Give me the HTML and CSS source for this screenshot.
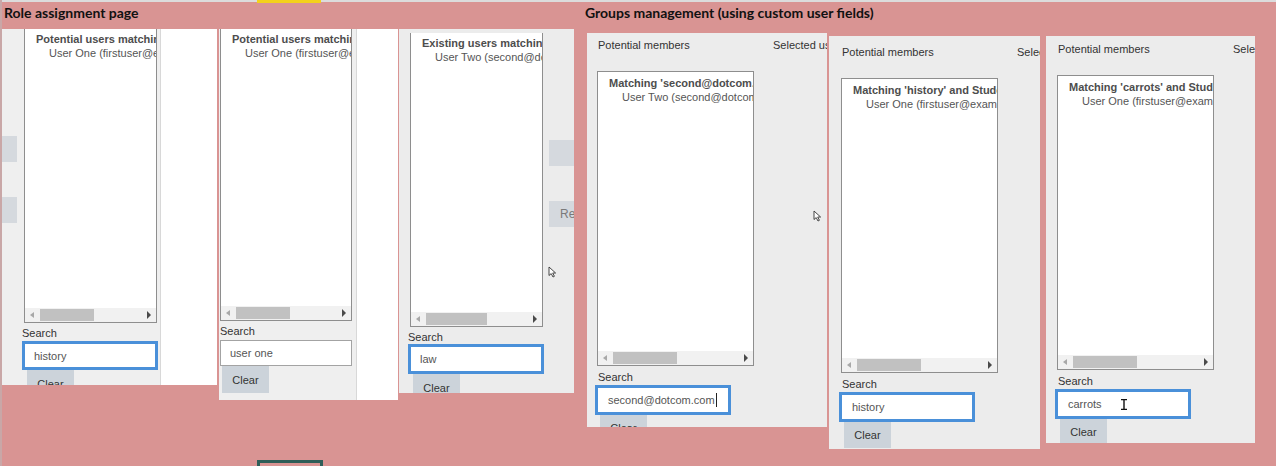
FILE: index.html
```html
<!DOCTYPE html>
<html lang="en">
  <head>
    <meta charset="UTF-8" />
    <meta name="viewport" content="width=device-width, initial-scale=1.0" />
    <title>User selector screenshots</title>
    <link rel="stylesheet" href="styles.css">
  </head>
  <body>
    <div class="topline"><span class="mark"></span></div>
    <h1 class="cap cap-role">Role assignment page</h1>
    <h1 class="cap cap-groups">Groups management (using custom user fields)</h1>

    <!-- role assignment, three states -->
    <section class="shot r1">
      <div class="side">
        <div class="stub s1"></div>
        <div class="stub s2"></div>
      </div>
      <div class="col">
        <div class="list cut">
          <div class="list-body">
            <b>Potential users matching 'history'</b>
            <div class="opt">User One (firstuser@example.com)</div>
          </div>
          <div class="hscroll"><i class="arr-l"></i><i class="thumb"></i><i class="arr-r"></i></div>
        </div>
        <p class="lbl">Search</p>
        <div class="field">history</div>
        <div class="btn">Clear</div>
      </div>
      <div class="blank"></div>
    </section>

    <section class="shot r2">
      <div class="col">
        <div class="list cut">
          <div class="list-body">
            <b>Potential users matching 'user one'</b>
            <div class="opt">User One (firstuser@example.com)</div>
          </div>
          <div class="hscroll"><i class="arr-l"></i><i class="thumb"></i><i class="arr-r"></i></div>
        </div>
        <p class="lbl">Search</p>
        <div class="field plain">user one</div>
        <div class="btn">Clear</div>
      </div>
      <div class="blank"></div>
    </section>

    <section class="shot r3">
      <div class="col">
        <div class="list cut">
          <div class="list-body">
            <b>Existing users matching 'law'</b>
            <div class="opt">User Two (second@dotcom.com)</div>
          </div>
          <div class="hscroll"><i class="arr-l"></i><i class="thumb"></i><i class="arr-r"></i></div>
        </div>
        <p class="lbl">Search</p>
        <div class="field">law</div>
        <div class="btn">Clear</div>
      </div>
      <div class="rbtns">
        <div class="stub s1"></div>
        <div class="stub s2">Remove</div>
      </div>
    </section>

    <!-- groups, three states -->
    <section class="shot grp g1">
      <div class="ghead"><span>Potential members</span><span>Selected users</span></div>
      <div class="list glist">
        <div class="list-body">
          <b>Matching 'second@dotcom.com'</b>
          <div class="opt">User Two (second@dotcom.com)</div>
        </div>
        <div class="hscroll"><i class="arr-l"></i><i class="thumb"></i><i class="arr-r"></i></div>
      </div>
      <p class="lbl">Search</p>
      <div class="field">second@dotcom.com<span class="caret"></span></div>
      <div class="btn">Clear</div>
    </section>

    <section class="shot grp g2">
      <div class="ghead"><span>Potential members</span><span>Selected users</span></div>
      <div class="list glist">
        <div class="list-body">
          <b>Matching 'history' and Student ID</b>
          <div class="opt">User One (firstuser@example.com)</div>
        </div>
        <div class="hscroll"><i class="arr-l"></i><i class="thumb"></i><i class="arr-r"></i></div>
      </div>
      <p class="lbl">Search</p>
      <div class="field">history</div>
      <div class="btn">Clear</div>
    </section>

    <section class="shot grp g3">
      <div class="ghead"><span>Potential members</span><span>Selected users</span></div>
      <div class="list glist">
        <div class="list-body">
          <b>Matching 'carrots' and Student ID</b>
          <div class="opt">User One (firstuser@example.com)</div>
        </div>
        <div class="hscroll"><i class="arr-l"></i><i class="thumb"></i><i class="arr-r"></i></div>
      </div>
      <p class="lbl">Search</p>
      <div class="field">carrots
        <svg class="ibeam" width="6" height="11" viewBox="0 0 6 11"><path d="M0 0.5h6M0 10.5h6M3 0.5v10" stroke="#111" stroke-width="1.4" fill="none"/></svg>
      </div>
      <div class="btn">Clear</div>
    </section>

    <svg class="pointer p1" width="9" height="12" viewBox="0 0 9 12"><path d="M1 1 L1 9.5 L3.2 7.6 L5 11 L6.4 10.3 L4.7 7 L7.6 7 Z" fill="#fff" stroke="#333" stroke-width="0.9"/></svg>
    <svg class="pointer p2" width="9" height="12" viewBox="0 0 9 12"><path d="M1 1 L1 9.5 L3.2 7.6 L5 11 L6.4 10.3 L4.7 7 L7.6 7 Z" fill="#fff" stroke="#333" stroke-width="0.9"/></svg>

    <div class="frame"></div>
  </body>
</html>
```

FILE: styles.css
```css
* {
  box-sizing: border-box;
  margin: 0;
  padding: 0;
}

body {
  position: relative;
  width: 1276px;
  height: 466px;
  overflow: hidden;
  background-color: #d99493;
  border-left: 2px solid #c9a7a7;
  font-family: "Liberation Sans", Arial, sans-serif;
  font-size: 11px;
  color: #333;
}

.topline {
  position: absolute;
  left: 0;
  top: 0;
  width: 100%;
  height: 2px;
  background-color: #dcdcdc;
}

.mark {
  position: absolute;
  left: 255px;
  top: 0;
  width: 64px;
  height: 3px;
  background-color: #f3d21c;
}

.frame {
  position: absolute;
  left: 255px;
  top: 460px;
  width: 66px;
  height: 20px;
  border: 3px solid #2f5e58;
}

.cap {
  position: absolute;
  top: 4px;
  font-family: Lato, "Liberation Sans", sans-serif;
  font-weight: 700;
  font-size: 14px;
  line-height: 17px;
  color: #111;
  white-space: nowrap;
}

.cap-role {
  left: 2px;
}

.cap-groups {
  left: 583px;
}

/* screenshot panels */
.shot {
  position: absolute;
  overflow: hidden;
  background-color: #efefef;
}

.list {
  display: flex;
  flex-direction: column;
  background-color: #fff;
  border: 1px solid #8e8e8e;
}

.list.cut {
  border-top: none;
}

.list-body {
  flex: 1;
  overflow: hidden;
  padding: 4px 0 0 11px;
  line-height: 14px;
  white-space: nowrap;
  color: #555;
}

.list.cut .list-body {
  padding-top: 3px;
}

.list-body b {
  color: #4d4d4d;
}

.opt {
  padding-left: 13px;
}

.hscroll {
  display: flex;
  align-items: center;
  height: 14px;
  background-color: #f1f1f1;
}

.hscroll i {
  display: block;
}

.arr-l {
  margin-left: 5px;
  border-top: 3.5px solid transparent;
  border-bottom: 3.5px solid transparent;
  border-right: 4px solid #a8a8a8;
}

.thumb {
  width: 54px;
  height: 12px;
  margin-left: 6px;
  background-color: #c1c1c1;
}

.arr-r {
  margin-left: auto;
  margin-right: 5px;
  border-top: 4px solid transparent;
  border-bottom: 4px solid transparent;
  border-left: 4px solid #4a4a4a;
}

.lbl {
  margin-top: 4px;
  line-height: 13px;
  color: #333;
}

.field {
  position: relative;
  display: flex;
  align-items: center;
  width: 136px;
  height: 29px;
  padding-left: 9px;
  border: 3px solid #4a90d9;
  background-color: #fff;
  color: #555;
  white-space: nowrap;
}

.field.plain {
  height: 26px;
  border: 1px solid #a3a3a3;
}

.btn {
  display: flex;
  align-items: center;
  justify-content: center;
  width: 47px;
  height: 27px;
  margin-left: 5px;
  background-color: #ccd3da;
  color: #333;
}

.caret {
  display: inline-block;
  width: 1px;
  height: 14px;
  margin-left: 1px;
  background-color: #222;
}

.ibeam {
  position: absolute;
  left: 63px;
  top: 7px;
}

.pointer {
  position: absolute;
}

.p1 {
  left: 546px;
  top: 266px;
}

.p2 {
  left: 811px;
  top: 210px;
}

/* role assignment 1 */
.r1 {
  left: 0;
  top: 29px;
  width: 215px;
  height: 356px;
  display: flex;
}

.side {
  width: 20px;
}

.stub {
  height: 26px;
  background-color: #d5d9de;
}

.side .stub {
  width: 15px;
}

.side .s1 {
  margin-top: 107px;
}

.side .s2 {
  margin-top: 35px;
}

.col {
  flex-shrink: 0;
}

.r1 .col {
  width: 138px;
}

.r1 .list {
  width: 133px;
  height: 294px;
  margin-left: 2px;
}

.r1 .field {
  margin-top: 1px;
}

.blank {
  flex: 1;
  background-color: #fff;
  border-left: 1px solid #d8d8d8;
}

/* role assignment 2 */
.r2 {
  left: 217px;
  top: 29px;
  width: 179px;
  height: 371px;
  display: flex;
}

.r2 .col {
  width: 137px;
  padding-left: 1px;
}

.r2 .list {
  width: 132px;
  height: 292px;
}

.r2 .list-body {
  padding-top: 1px;
}

.r2 .field {
  width: 132px;
  margin-top: 2px;
}

.r2 .btn {
  margin-left: 2px;
}

/* role assignment 3 */
.r3 {
  left: 397px;
  top: 29px;
  width: 175px;
  height: 364px;
  display: flex;
  background-color: #ececec;
}

.r3 .col {
  width: 145px;
  padding-left: 9px;
}

.r3 .list {
  width: 133px;
  height: 294px;
  margin-top: 4px;
  margin-left: 2px;
}

.r3 .thumb {
  width: 61px;
}

.r3 .field {
  height: 30px;
}

.rbtns {
  width: 40px;
  margin-left: 5px;
}

.rbtns .stub {
  padding-left: 11px;
  line-height: 26px;
  font-size: 12px;
  color: #7a7a7a;
  white-space: nowrap;
}

.rbtns .s1 {
  margin-top: 111px;
}

.rbtns .s2 {
  margin-top: 35px;
}

/* groups panels */
.grp {
  background-color: #ececec;
  padding-left: var(--pl);
  padding-top: var(--pt);
}

.g1 {
  left: 585px;
  top: 33px;
  width: 240px;
  height: 394px;
  --pl: 10px;
  --pt: 6px;
}

.g2 {
  left: 827px;
  top: 36px;
  width: 211px;
  height: 413px;
  --pl: 12px;
  --pt: 10px;
}

.g3 {
  left: 1044px;
  top: 36px;
  width: 209px;
  height: 407px;
  --pl: 11px;
  --pt: 7px;
}

.ghead {
  display: flex;
  padding-left: 1px;
  line-height: 13px;
  white-space: nowrap;
  color: #333;
}

.ghead span:first-child {
  width: 175px;
  flex-shrink: 0;
}

.glist {
  width: 157px;
  height: 295px;
  margin-top: 19px;
}

.glist .thumb {
  width: 64px;
}

.grp .lbl {
  margin-top: 5px;
  padding-left: 1px;
}

.grp .field {
  height: 30px;
  margin-top: 1px;
  margin-left: -2px;
  padding-left: 10px;
}

.grp .btn {
  margin-top: -1px;
  margin-left: 3px;
}
```
